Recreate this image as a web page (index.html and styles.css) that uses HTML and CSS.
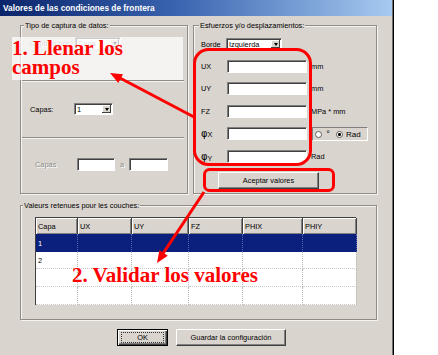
FILE: index.html
```html
<!DOCTYPE html>
<html>
<head>
<meta charset="utf-8">
<link rel="stylesheet" href="styles.css">
</head>
<body>
<div class="page">
  <div class="dialog">
    <div class="titlebar">Valores de las condiciones de frontera</div>
    <div class="content">
      <div class="top">
        <div class="group g-left">
          <div class="legend lg-left">Tipo de captura de datos:</div>
          <div class="row r1"><span class="lbl w45 dis">Captura por</span><div class="combo c-capa"><span class="dis">Capa</span><i class="drop"></i></div></div>
          <div class="sep s1"></div>
          <div class="row r2"><span class="lbl w44">Capas:</span><div class="combo c-capas"><span>1</span><i class="drop"></i></div></div>
          <div class="sep s2"></div>
          <div class="row r3"><span class="lbl w42 dis">Capas</span><div class="tb tb-a"></div><span class="lbl-a dis">a</span><div class="tb tb-b"></div></div>
        </div>
        <div class="group g-right">
          <div class="legend lg-right">Esfuerzos y/o desplazamientos:</div>
          <div class="row rb"><span class="lbl w25">Borde</span><div class="combo c-borde"><span>Izquierda</span><i class="drop"></i></div></div>
          <div class="row rv mt10"><span class="lbl w26">UX</span><div class="tb tb-v"></div><span class="unit">mm</span></div>
          <div class="row rv mt9"><span class="lbl w26">UY</span><div class="tb tb-v"></div><span class="unit">mm</span></div>
          <div class="row rv mt10"><span class="lbl w26">FZ</span><div class="tb tb-v"></div><span class="unit">MPa * mm</span></div>
          <div class="row rv mt9"><span class="lbl w26"><span class="phi">φ</span>X</span><div class="tb tb-v"></div>
            <div class="radios"><i class="radio"></i><span class="deg">°</span><i class="radio on"></i><span>Rad</span></div></div>
          <div class="row rv mt10"><span class="lbl w26"><span class="phi">φ</span><span class="sub">Y</span></span><div class="tb tb-v"></div><span class="unit">Rad</span></div>
          <div class="btn btn-acc">Aceptar valores</div>
        </div>
      </div>
      <div class="group g-bottom">
        <div class="legend lg-bottom">Valeurs retenues pour les couches:</div>
        <div class="table">
          <div class="th">Capa</div><div class="th">UX</div><div class="th">UY</div><div class="th">FZ</div><div class="th">PHIX</div><div class="th">PHIY</div>
          <div class="td sel">1</div><div class="td sel"></div><div class="td sel"></div><div class="td sel"></div><div class="td sel"></div><div class="td sel"></div>
          <div class="td">2</div><div class="td"></div><div class="td"></div><div class="td"></div><div class="td"></div><div class="td"></div>
          <div class="td"></div><div class="td"></div><div class="td"></div><div class="td"></div><div class="td"></div><div class="td"></div>
          <div class="td"></div><div class="td"></div><div class="td"></div><div class="td"></div><div class="td"></div><div class="td"></div>
        </div>
      </div>
      <div class="buttons">
        <div class="btn btn-ok"><span class="focus">OK</span></div>
        <div class="btn btn-save">Guardar la configuración</div>
      </div>
    </div>
  </div>
  <div class="note note1">1. Llenar los<br>campos</div>
  <div class="note note2">2. Validar los valores</div>
  <svg class="marks" viewBox="0 0 438 355" xmlns="http://www.w3.org/2000/svg">
    <g fill="none" stroke="#ff0000" stroke-width="3">
      <rect x="194.5" y="49.5" width="116" height="115" rx="14"/>
      <rect x="204.5" y="169.5" width="129" height="21" rx="5"/>
      <line x1="194" y1="117" x2="119" y2="77.5"/>
      <line x1="204" y1="192" x2="162" y2="255"/>
    </g>
    <g fill="#ff0000">
      <polygon points="110,73 123,74.2 118.3,83"/>
      <polygon points="157,263 167.8,255.8 159.4,250.2"/>
    </g>
  </svg>
</div>
</body>
</html>
```

FILE: styles.css
```css
body {
  margin: 0;
  background: #fff;
  font-family: "Liberation Sans", Arial, sans-serif;
  font-size: 7.4px;
  color: #000;
}
.page {
  position: relative;
  width: 438px;
  height: 355px;
  overflow: hidden;
}
.dialog {
  width: 394px;
  height: 355px;
  box-sizing: border-box;
  background: #d9d4ce;
  border-right: 1px solid #000;
  box-shadow: inset -1px 0 0 #707070;
}
.titlebar {
  height: 16px;
  box-sizing: border-box;
  padding-left: 3px;
  margin-right: 1px;
  display: flex;
  align-items: center;
  background: linear-gradient(90deg, #0a246a 0%, #3a64b0 45%, #a6caf0 100%);
  color: #fff;
  font-weight: bold;
  font-size: 8.3px;
}
.content {
  padding-left: 20px;
}
.top {
  display: flex;
  gap: 5px;
  margin-top: 9px;
}
.group {
  box-sizing: border-box;
  border: 1px solid #8e8a84;
  box-shadow: inset 1px 1px 0 #f6f4f0, 1px 1px 0 #f6f4f0;
}
.g-left { width: 168px; height: 169px; }
.g-right { width: 184px; height: 169px; }
.g-bottom { width: 357px; height: 115px; margin-top: 11px; }
.legend {
  width: max-content;
  height: 9px;
  line-height: 9px;
  margin-top: -5px;
  padding: 0 1px;
  background: #d9d4ce;
}
.lg-left { margin-left: 3px; }
.lg-right { margin-left: 5px; }
.lg-bottom { margin-left: 2px; }

.row { display: flex; align-items: center; }
.lbl { flex: none; }
.w45 { width: 45px; }
.w44 { width: 44px; }
.w42 { width: 42px; }
.w25 { width: 25px; }
.w26 { width: 26px; }
.dis { color: #8c8c8c; text-shadow: 1px 1px 0 #fff; }

.r1 { margin-top: 7px; height: 12px; padding-left: 9px; }
.r2 { margin-top: 21px; height: 12px; padding-left: 9px; }
.r3 { margin-top: 19px; height: 13px; padding-left: 14px; }
.s1 { margin-top: 31px; }
.s2 { margin-top: 22px; }
.sep {
  height: 0;
  border-top: 1px solid #8e8a84;
  border-bottom: 1px solid #f6f4f0;
  margin-left: 1px;
  margin-right: 3px;
}

.combo {
  display: flex;
  align-items: center;
  box-sizing: border-box;
  height: 12px;
  padding-left: 2px;
  background: #fff;
  border: 1px solid;
  border-color: #808080 #fff #fff #808080;
  box-shadow: inset 1px 1px 0 #404040;
}
.combo span { flex: 1; }
.c-capa { width: 46px; }
.c-capas { width: 39px; }
.c-borde { width: 56px; }
.drop {
  flex: none;
  width: 9px;
  height: 8px;
  margin-right: 1px;
  display: flex;
  align-items: center;
  justify-content: center;
  background: #d9d4ce;
  box-shadow: inset -1px -1px 0 #404040, inset 1px 1px 0 #fff;
}
.drop::after {
  content: "";
  border-left: 2.5px solid transparent;
  border-right: 2.5px solid transparent;
  border-top: 3px solid #000;
}

.tb {
  flex: none;
  box-sizing: border-box;
  height: 13px;
  background: #fff;
  border: 1px solid;
  border-color: #808080 #fff #fff #808080;
  box-shadow: inset 1px 1px 0 #404040;
}
.tb-a { width: 38px; }
.tb-b { width: 39px; }
.tb-v { width: 80px; }
.lbl-a { width: 14px; padding-left: 5px; box-sizing: border-box; }

.rb { margin-top: 8px; height: 12px; padding-left: 7px; }
.rv { height: 13px; padding-left: 7px; }
.mt9 { margin-top: 9px; }
.mt10 { margin-top: 10px; }
.unit { margin-left: 4px; white-space: nowrap; }
.phi {
  font-family: "DejaVu Sans", sans-serif;
  font-size: 10px;
  line-height: 10px;
}
.sub { font-size: 7px; vertical-align: -1px; }

.radios {
  flex: none;
  margin-left: 5px;
  margin-top: 1px;
  width: 56px;
  height: 14px;
  box-sizing: border-box;
  display: flex;
  align-items: center;
  padding-left: 2px;
  border: 1px solid;
  border-color: #808080 #fff #fff #808080;
}
.radio {
  width: 7px;
  height: 7px;
  box-sizing: border-box;
  border-radius: 50%;
  background: #fff;
  border: 1px solid #606060;
}
.radio.on { background: radial-gradient(circle, #000 0 1.3px, #fff 1.6px); }
.deg { width: 12px; text-align: center; margin-right: 2px; font-size: 9px; }
.radios span:last-child { margin-left: 3px; font-size: 8px; }

.btn {
  box-sizing: border-box;
  height: 17px;
  display: flex;
  align-items: center;
  justify-content: center;
  background: #d9d4ce;
  border: 1px solid;
  border-color: #fff #404040 #404040 #fff;
  box-shadow: inset -1px -1px 0 #808080;
}
.btn-acc { width: 101px; margin: 9px 0 0 24px; }

.table {
  margin: 7px 0 0 14px;
  width: 321px;
  display: grid;
  grid-template-columns: 42px 54px 57px 54px 60px 54px;
  grid-template-rows: 16px 18px 17px 18px 18px;
  background: #fff;
  box-sizing: border-box;
  border-left: 1px solid #404040;
  border-top: 1px solid #404040;
}
.th {
  background: #d9d4ce;
  box-sizing: border-box;
  padding: 1px 0 0 2px;
  border-right: 1px solid #404040;
  box-shadow: inset 1px 1px 0 #fff, inset -1px -1px 0 #808080;
  display: flex;
  align-items: center;
}
.td {
  box-sizing: border-box;
  padding-left: 2px;
  display: flex;
  align-items: center;
  border-right: 1px dotted #b8b8b8;
  border-bottom: 1px dotted #c8c8c8;
}
.td.sel {
  background: #0b1f7c;
  color: #fff;
  border-right: 1px dotted #5a66a8;
  border-bottom: none;
}

.buttons {
  display: flex;
  gap: 8px;
  margin-top: 9px;
  padding-left: 97px;
}
.btn-ok {
  width: 51px;
  border: 1px solid #000;
  box-shadow: inset 1px 1px 0 #fff, inset -1px -1px 0 #404040, inset -2px -2px 0 #808080;
}
.btn-ok .focus {
  width: 41px;
  height: 9px;
  line-height: 9px;
  text-align: center;
  outline: 1px dotted #333;
}
.btn-save { width: 110px; }

.note {
  position: absolute;
  color: #ff0000;
  font-family: "Liberation Serif", "Times New Roman", serif;
  font-weight: bold;
  font-size: 21px;
}
.note1 {
  left: 12px;
  top: 37px;
  width: 171px;
  height: 43px;
  box-sizing: border-box;
  padding-top: 2px;
  line-height: 19px;
  background: rgba(255, 255, 255, 0.72);
}
.note2 {
  left: 72px;
  top: 265px;
  line-height: 21px;
  white-space: nowrap;
}
.marks {
  position: absolute;
  left: 0;
  top: 0;
  width: 438px;
  height: 355px;
}
```
